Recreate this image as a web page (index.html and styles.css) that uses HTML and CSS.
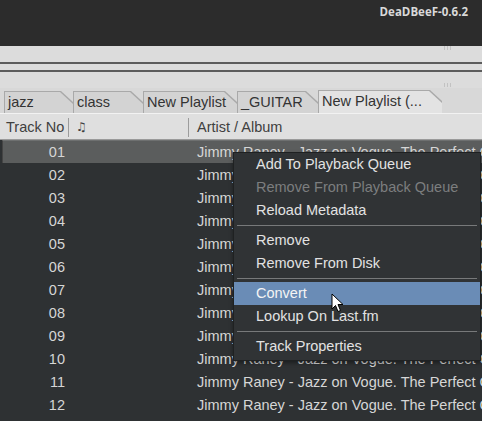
FILE: index.html
```html
<!DOCTYPE html>
<html>
<head>
<meta charset="utf-8">
<link rel="stylesheet" href="styles.css">
</head>
<body>
<div class="window">
  <div class="titlebar"><span class="title">DeaDBeeF-0.6.2</span></div>
  <div class="toolbar">
    <div class="grip-row"><span class="grip"></span></div>
    <div class="seek"></div>
    <div class="seek"></div>
    <div class="grip-row bottom"><span class="grip"></span></div>
  </div>
  <div class="tabstrip">
    <div class="tab" style="width:69px"><div class="tab-in">jazz</div></div>
    <div class="tab" style="width:70px"><div class="tab-in">class</div></div>
    <div class="tab" style="width:94px"><div class="tab-in">New Playlist</div></div>
    <div class="tab" style="width:81px"><div class="tab-in">_GUITAR</div></div>
    <div class="tab active" style="width:124px"><div class="tab-in">New Playlist (...</div></div>
  </div>
  <div class="header">
    <div class="hcol c1">Track No</div>
    <div class="hcol c2">&#9835;</div>
    <div class="hcol c3">Artist / Album</div>
  </div>
  <div class="list">
    <div class="row selected"><div class="c1 num">01</div><div class="c2"></div><div class="c3 artist">Jimmy Raney - Jazz on Vogue. The Perfect Combination</div></div>
    <div class="row"><div class="c1 num">02</div><div class="c2"></div><div class="c3 artist">Jimmy Raney - Jazz on Vogue. The Perfect Combination</div></div>
    <div class="row"><div class="c1 num">03</div><div class="c2"></div><div class="c3 artist">Jimmy Raney - Jazz on Vogue. The Perfect Combination</div></div>
    <div class="row"><div class="c1 num">04</div><div class="c2"></div><div class="c3 artist">Jimmy Raney - Jazz on Vogue. The Perfect Combination</div></div>
    <div class="row"><div class="c1 num">05</div><div class="c2"></div><div class="c3 artist">Jimmy Raney - Jazz on Vogue. The Perfect Combination</div></div>
    <div class="row"><div class="c1 num">06</div><div class="c2"></div><div class="c3 artist">Jimmy Raney - Jazz on Vogue. The Perfect Combination</div></div>
    <div class="row"><div class="c1 num">07</div><div class="c2"></div><div class="c3 artist">Jimmy Raney - Jazz on Vogue. The Perfect Combination</div></div>
    <div class="row"><div class="c1 num">08</div><div class="c2"></div><div class="c3 artist">Jimmy Raney - Jazz on Vogue. The Perfect Combination</div></div>
    <div class="row"><div class="c1 num">09</div><div class="c2"></div><div class="c3 artist">Jimmy Raney - Jazz on Vogue. The Perfect Combination</div></div>
    <div class="row"><div class="c1 num">10</div><div class="c2"></div><div class="c3 artist">Jimmy Raney - Jazz on Vogue. The Perfect Combination</div></div>
    <div class="row"><div class="c1 num">11</div><div class="c2"></div><div class="c3 artist">Jimmy Raney - Jazz on Vogue. The Perfect Combination</div></div>
    <div class="row"><div class="c1 num">12</div><div class="c2"></div><div class="c3 artist">Jimmy Raney - Jazz on Vogue. The Perfect Combination</div></div>
  </div>

  <div class="menu">
    <div class="item">Add To Playback Queue</div>
    <div class="item disabled">Remove From Playback Queue</div>
    <div class="item">Reload Metadata</div>
    <div class="sep"></div>
    <div class="item">Remove</div>
    <div class="item">Remove From Disk</div>
    <div class="sep"></div>
    <div class="item hover">Convert</div>
    <div class="item">Lookup On Last.fm</div>
    <div class="sep"></div>
    <div class="item">Track Properties</div>
  </div>

  <svg class="cursor" width="14" height="20" viewBox="0 0 14 20">
    <path d="M1 1 L1 16 L4.5 12.5 L7 18.5 L9.5 17.5 L7 11.5 L12 11.5 Z" fill="#ffffff" stroke="#000000" stroke-width="1" stroke-linejoin="round"/>
  </svg>
</div>
</body>
</html>
```

FILE: styles.css
```css
* { box-sizing: border-box; }
html, body { margin: 0; padding: 0; }
body {
  width: 482px;
  height: 421px;
  overflow: hidden;
  background: #2e3133;
  font-family: "Liberation Sans", Arial, sans-serif;
}
.window {
  position: relative;
  width: 482px;
  height: 421px;
  overflow: hidden;
}
.titlebar {
  height: 46px;
  background: #2c2c2c;
  display: flex;
  justify-content: flex-end;
  align-items: flex-start;
  padding: 4px 14px 0 0;
}
.title {
  font-family: "Open Sans", "DejaVu Sans", sans-serif;
  font-weight: 700;
  font-size: 11.5px;
  color: #d9d9d9;
  line-height: 16px;
}
.toolbar {
  height: 42px;
  background: #dcdcdc;
  display: flex;
  flex-direction: column;
}
.grip-row {
  height: 16px;
  display: flex;
  justify-content: flex-end;
  padding-right: 30px;
}
.grip-row.bottom {
  height: 16px;
  align-items: flex-end;
  padding-bottom: 1px;
}
.grip {
  width: 8px;
  height: 4px;
  background: repeating-linear-gradient(90deg, #c2c2c2 0 1px, transparent 1px 3px);
}
.seek {
  height: 2px;
  background: #5c5c5c;
  margin-bottom: 6px;
}
.seek + .seek { margin-bottom: 0; }
.tabstrip {
  height: 26px;
  background: #d8d8d8;
  display: flex;
  align-items: flex-end;
  padding-left: 4px;
  border-bottom: 1px solid #f2f2f2;
}
.tab {
  height: 22px;
  background: #a9a9a9;
  clip-path: polygon(0 0, calc(100% - 12px) 0, 100% 11px, 100% 100%, 0 100%);
  flex: none;
}
.tab-in {
  height: 21px;
  margin: 1px 0 0 1px;
  background: #d3d3d3;
  clip-path: polygon(0 0, calc(100% - 13px) 0, 100% 12px, 100% 100%, 0 100%);
  font-size: 14.5px;
  color: #333;
  line-height: 20px;
  padding-left: 3px;
  white-space: nowrap;
}
.tab.active { height: 23px; }
.tab.active .tab-in { height: 22px; background: #e3e3e3; }
.header {
  height: 26px;
  background: #dfdfdf;
  display: flex;
  align-items: center;
  padding-top: 1px;
  border-bottom: 1px solid #9a9a9a;
}
.hcol {
  font-size: 14.5px;
  color: #404040;
  height: 19px;
  line-height: 19px;
  white-space: nowrap;
}
.header .c1 { width: 69px; padding-left: 6px; border-right: 1px solid #9c9c9c; }
.header .c2 { width: 120px; padding-left: 7px; border-right: 1px solid #9c9c9c; font-family: "DejaVu Sans", sans-serif; font-size: 12px; }
.header .c3 { flex: 1; padding-left: 8px; }
.list {
  background: #2e3133;
}
.row {
  height: 23px;
  display: flex;
  align-items: center;
  font-size: 14.5px;
  color: #d6d6d6;
  white-space: nowrap;
}
.row.selected {
  background: #5b5d5d;
  margin-left: 2px;
  border-top: 1px solid #6e7070;
  border-left: 1px solid #444;
}
.row .c1 { width: 69px; text-align: right; padding-right: 4px; flex: none; }
.row.selected .c1 { width: 66px; }
.row .c2 { width: 120px; flex: none; }
.row .c3 { flex: none; padding-left: 8px; }
.menu {
  position: absolute;
  left: 233px;
  top: 152px;
  width: 248px;
  background: #303335;
  border: 1px solid #1f2122;
  padding: 0 0 2px 0;
  box-shadow: 0 2px 4px rgba(0,0,0,0.4);
}
.item {
  height: 23px;
  line-height: 23px;
  padding-left: 22px;
  font-size: 14.5px;
  color: #e2e2e2;
  white-space: nowrap;
}
.item.disabled { color: #7c7e7f; }
.item.hover { background: #6a8cb6; color: #f4f4f4; }
.sep {
  height: 7px;
  display: flex;
  align-items: center;
  padding: 0 3px;
}
.sep::before {
  content: "";
  display: block;
  flex: 1;
  height: 1px;
  background: #77797a;
}
.cursor {
  position: absolute;
  left: 331px;
  top: 293px;
}
```
